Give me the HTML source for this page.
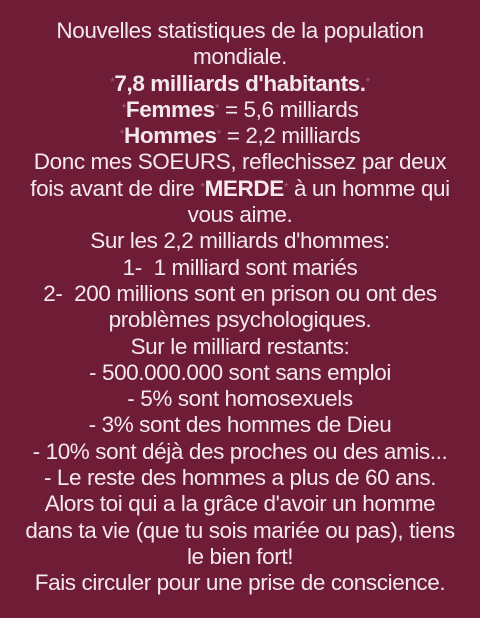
<!DOCTYPE html>
<html><head><meta charset="utf-8"><style>
html,body{margin:0;padding:0}
body{width:480px;height:618px;background:#6f1c37;overflow:hidden;font-family:"Liberation Sans",sans-serif;color:#f4e8ec;text-align:center}
.t{position:absolute;top:18px;left:0;width:480px;font-size:22.5px;line-height:26.3px;letter-spacing:-0.4px}
b{font-weight:bold}
.s{color:#a86079;font-size:12px;line-height:0;vertical-align:5px}
</style></head><body><div class="t">
Nouvelles statistiques de la population<br>
mondiale.<br>
<span class="s">*</span><b>7,8 milliards d'habitants.</b><span class="s">*</span><br>
<span class="s">*</span><b>Femmes</b><span class="s">*</span> = 5,6 milliards<br>
<span class="s">*</span><b>Hommes</b><span class="s">*</span> = 2,2 milliards<br>
Donc mes SOEURS, reflechissez par deux<br>
fois avant de dire <span class="s">*</span><b>MERDE</b><span class="s">*</span> à un homme qui<br>
vous aime.<br>
Sur les 2,2 milliards d'hommes:<br>
1-&nbsp; 1 milliard sont mariés<br>
2-&nbsp; 200 millions sont en prison ou ont des<br>
problèmes psychologiques.<br>
Sur le milliard restants:<br>
- 500.000.000 sont sans emploi<br>
- 5% sont homosexuels<br>
- 3% sont des hommes de Dieu<br>
- 10% sont déjà des proches ou des amis...<br>
- Le reste des hommes a plus de 60 ans.<br>
Alors toi qui a la grâce d'avoir un homme<br>
dans ta vie (que tu sois mariée ou pas), tiens<br>
le bien fort!<br>
Fais circuler pour une prise de conscience.
</div></body></html>
